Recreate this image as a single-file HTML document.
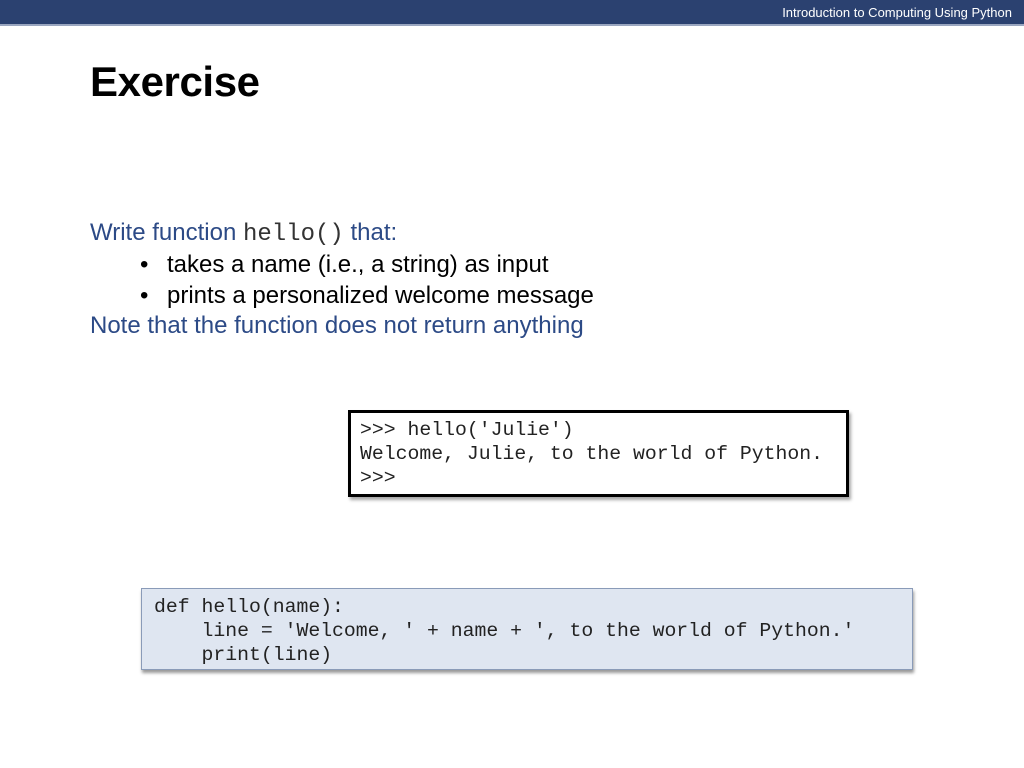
<!DOCTYPE html>
<html><head><style>
body{margin:0;width:1024px;height:768px;background:#fff;position:relative;overflow:hidden;font-family:"Liberation Sans",sans-serif}
.bar{position:absolute;left:0;top:0;width:1024px;height:24px;background:#2b4170;border-bottom:2px solid #9aa6c0}
.bar span{position:absolute;right:12px;top:5px;color:#fff;font-size:13px;letter-spacing:0}
h1{position:absolute;left:90px;top:58px;margin:0;font-size:42px;font-weight:bold;letter-spacing:-0.4px;color:#000}
.t{position:absolute;font-size:24px;white-space:nowrap;letter-spacing:0}
.b{color:#2c4a86}
.k{color:#000}
.mono{font-family:"Liberation Mono",monospace}
.box{position:absolute;font-family:"Liberation Mono",monospace;font-size:19.8px;line-height:24px;white-space:pre;color:#222}
</style></head><body>
<div class="bar"><span>Introduction to Computing Using Python</span></div>
<h1>Exercise</h1>
<div class="t b" style="left:90px;top:219px">Write function <span class="mono" style="font-size:24px;color:#333">hello()</span> that:</div>
<div class="t k" style="left:140px;top:251px">•<span style="position:absolute;left:27px">takes a name (i.e., a string) as input</span></div>
<div class="t k" style="left:140px;top:282px">•<span style="position:absolute;left:27px">prints a personalized welcome message</span></div>
<div class="t b" style="left:90px;top:312px">Note that the function does not return anything</div>
<div class="box" style="left:348px;top:410px;width:486px;height:76px;border:3px solid #000;padding:5px 0 0 9px;box-shadow:2px 3px 3px rgba(0,0,0,0.35)">&gt;&gt;&gt; hello('Julie')
Welcome, Julie, to the world of Python.
&gt;&gt;&gt;</div>
<div class="box" style="left:141px;top:588px;width:758px;height:74px;background:#dfe6f1;border:1px solid #8a9bb8;padding:6px 0 0 12px;box-shadow:1px 3px 3px rgba(0,0,0,0.4)">def hello(name):
    line = 'Welcome, ' + name + ', to the world of Python.'
    print(line)</div>
</body></html>
